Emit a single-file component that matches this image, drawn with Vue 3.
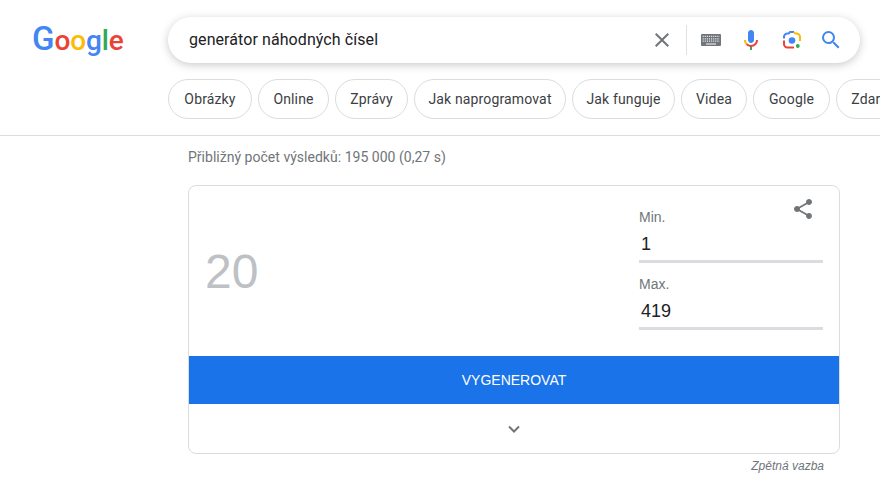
<script setup>
import { ref } from "vue";

const query = ref("generátor náhodných čísel");
const min = ref("1");
const max = ref("419");
const chips = [
  { text: "Obrázky", width: 84 },
  { text: "Online", width: 71 },
  { text: "Zprávy", width: 73 },
  { text: "Jak naprogramovat", width: 152 },
  { text: "Jak funguje", width: 103 },
  { text: "Videa", width: 66 },
  { text: "Google", width: 77 },
  { text: "Zdarma", width: 80 }
];
const logo = [
  { ch: "G", color: "#4285f4" },
  { ch: "o", color: "#ea4335" },
  { ch: "o", color: "#fbbc05" },
  { ch: "g", color: "#4285f4" },
  { ch: "l", color: "#34a853" },
  { ch: "e", color: "#ea4335" }
];
</script>

<template>
  <div class="page">
    <header class="header">
      <div class="top">
        <div class="logo">
          <span v-for="(l, i) in logo" :key="i" :style="{ color: l.color }">{{ l.ch }}</span>
        </div>
        <div class="search">
          <input class="query" type="text" v-model="query" />
          <svg class="clear" width="24" height="24" viewBox="0 0 24 24">
            <path fill="#70757a" d="M19 6.41L17.59 5 12 10.59 6.41 5 5 6.41 10.59 12 5 17.59 6.41 19 12 13.41 17.59 19 19 17.59 13.41 12z" />
          </svg>
          <span class="divider"></span>
          <svg class="kbd" width="20" height="12" viewBox="0 0 20 12">
            <rect width="20" height="12" rx="1" fill="#70757a" />
            <path stroke="#e4e5e7" stroke-width="1.2" stroke-dasharray="1.2 0.9" d="M1.6 2.4h17M1.6 4.8h17M1.6 7.2h17" />
            <path stroke="#e4e5e7" stroke-width="1.2" d="M5 10h10" />
          </svg>
          <svg class="mic" width="24" height="24" viewBox="0 0 24 24">
            <path fill="#4285f4" d="m12 15c1.66 0 3-1.31 3-2.97v-7.02c0-1.66-1.34-3.01-3-3.01s-3 1.34-3 3.01v7.02c0 1.66 1.34 2.97 3 2.97z" />
            <path fill="#34a853" d="m11 18.08h2v3.92h-2z" />
            <path fill="#fbbc04" d="m7.05 16.87c-1.27-1.33-2.05-2.83-2.05-4.87h2c0 1.45 0.56 2.42 1.47 3.38v0.32l-1.15 1.18z" />
            <path fill="#ea4335" d="m12 16.93a4.97 5.25 0 0 1 -3.54 -1.55l-1.41 1.49c1.26 1.34 3.02 2.13 4.95 2.13 3.87 0 6.99-2.92 6.99-6.99h-2c0 2.92-2.24 4.92-4.99 4.92z" />
          </svg>
          <svg class="lens" width="20" height="20" viewBox="0 0 20 20">
            <circle cx="10" cy="10.500" r="3.3" fill="#4285f4" />
            <circle cx="15.8" cy="16" r="1.9" fill="#34a853" />
            <path fill="none" stroke="#4285f4" stroke-width="2" d="M2 8.500V7A3.500 3.500 0 0 1 5.500 3.500H6.800L8 2h4" />
            <path fill="none" stroke="#ea4335" stroke-width="2" d="M2 10.500v3.500A3.500 3.500 0 0 0 5.500 17.500H12" />
            <path fill="none" stroke="#fbbc05" stroke-width="2" d="M12 2l1.200 1.500h1.300A3.500 3.500 0 0 1 18 7v4" />
          </svg>
          <svg class="glass" width="24" height="24" viewBox="0 0 24 24">
            <path fill="#4285f4" d="M15.5 14h-.79l-.28-.27A6.471 6.471 0 0 0 16 9.500 6.500 6.500 0 1 0 9.500 16c1.610 0 3.090-.59 4.230-1.570l.27.28v.79l5 4.990L20.490 19l-4.990-5zm-6 0C7.010 14 5 11.990 5 9.500S7.010 5 9.500 5 14 7.010 14 9.500 11.990 14 9.500 14z" />
          </svg>
        </div>
      </div>
      <div class="chips">
        <span v-for="c in chips" :key="c.text" class="chip" :style="{ width: c.width + 'px' }">{{ c.text }}</span>
      </div>
    </header>

    <main class="content">
      <div class="stats">Přibližný počet výsledků: 195 000 (0,27 s)</div>
      <section class="card">
        <svg class="share" width="24" height="24" viewBox="0 0 24 24">
          <path fill="#70757a" d="M18 16.080c-.76 0-1.440.3-1.960.77L8.910 12.700c.05-.23.09-.46.09-.7s-.04-.47-.09-.7l7.050-4.110c.54.5 1.250.81 2.040.81 1.660 0 3-1.340 3-3s-1.340-3-3-3-3 1.340-3 3c0 .24.04.47.09.7L8.040 9.810C7.500 9.310 6.790 9 6 9c-1.660 0-3 1.340-3 3s1.340 3 3 3c.79 0 1.500-.31 2.040-.81l7.120 4.160c-.05.21-.08.43-.08.65 0 1.610 1.310 2.920 2.920 2.920 1.610 0 2.920-1.310 2.920-2.920s-1.310-2.920-2.920-2.920z" />
        </svg>
        <div class="body">
          <div class="result">20</div>
          <div class="fields">
            <label class="field">
              <span class="label">Min.</span>
              <input class="num" type="text" v-model="min" />
            </label>
            <label class="field">
              <span class="label">Max.</span>
              <input class="num" type="text" v-model="max" />
            </label>
          </div>
        </div>
        <button class="generate">VYGENEROVAT</button>
        <div class="more">
          <svg width="24" height="24" viewBox="0 0 24 24">
            <path fill="none" stroke="#70757a" stroke-width="2" d="M7 9.500l5 5 5-5" />
          </svg>
        </div>
      </section>
      <div class="feedback">Zpětná vazba</div>
    </main>
  </div>
</template>

<style>
html, body {
  margin: 0;
  background: #fff;
  overflow: hidden;
}
</style>

<style scoped>
.page {
  width: 880px;
  height: 504px;
  overflow: hidden;
  font-family: "Liberation Sans", Arial, sans-serif;
}
.header {
  height: 118px;
  border-bottom: 1px solid #dadce0;
  padding-top: 17px;
}
.top {
  display: flex;
  height: 46px;
}
.logo {
  flex: none;
  width: 168px;
  height: 46px;
  padding-left: 32px;
  box-sizing: border-box;
  font-family: "Roboto", sans-serif;
  font-size: 28px;
  font-weight: 500;
  line-height: 47px;
  letter-spacing: -0.1px;
  white-space: nowrap;
}
.logo span {
  line-height: 1;
}
.logo span:first-child {
  font-size: 33px;
}
.search {
  flex: none;
  width: 692px;
  height: 46px;
  border-radius: 23px;
  box-shadow: 0 2px 8px rgba(60, 64, 67, 0.28);
  display: flex;
  align-items: center;
  background: #fff;
}
.query {
  flex: 1;
  min-width: 0;
  border: 0;
  outline: 0;
  padding: 0 0 0 21px;
  height: 34px;
  margin-top: -2px;
  font-family: "Roboto", sans-serif;
  font-size: 16px;
  letter-spacing: 0.08px;
  color: #202124;
  background: transparent;
}
.clear {
  margin-left: 10px;
}
.divider {
  width: 1px;
  height: 30px;
  background: #dfe1e5;
  margin: 0 14px 0 12px;
}
.mic {
  margin-left: 18px;
}
.lens {
  margin-left: 19px;
}
.glass {
  margin: 0 17px 0 17px;
}
.chips {
  display: flex;
  gap: 6px;
  margin-top: 16px;
  padding-left: 168px;
  white-space: nowrap;
}
.chip {
  flex: none;
  box-sizing: border-box;
  height: 40px;
  line-height: 38px;
  text-align: center;
  border: 1px solid #dadce0;
  border-radius: 20px;
  font-family: "Roboto", sans-serif;
  font-size: 14px;
  letter-spacing: 0.15px;
  color: #3c4043;
}
.content {
  width: 652px;
  margin-left: 188px;
}
.stats {
  height: 49px;
  line-height: 42px;
  font-family: "Roboto", sans-serif;
  font-size: 14px;
  letter-spacing: 0.02px;
  color: #70757a;
  white-space: nowrap;
}
.card {
  position: relative;
  border: 1px solid #dadce0;
  border-radius: 8px;
  overflow: hidden;
}
.share {
  position: absolute;
  top: 11px;
  right: 24px;
}
.body {
  height: 170px;
  display: flex;
  align-items: center;
  justify-content: space-between;
  padding: 0 16px;
  box-sizing: border-box;
}
.result {
  font-size: 48px;
  line-height: 56px;
  padding-top: 2px;
  color: #bdc1c6;
}
.fields {
  align-self: flex-start;
  display: flex;
  flex-direction: column;
  gap: 13px;
  width: 184px;
  margin-top: 23px;
}
.field {
  display: block;
}
.label {
  display: block;
  font-size: 14px;
  line-height: 16px;
  color: #70757a;
}
.num {
  display: block;
  width: 100%;
  box-sizing: border-box;
  height: 38px;
  padding: 3px 0 0 2px;
  border: 0;
  border-bottom: 3px solid #dadce0;
  outline: 0;
  font-family: "Liberation Sans", Arial, sans-serif;
  font-size: 18px;
  color: #202124;
  background: transparent;
}
.generate {
  display: block;
  width: 100%;
  height: 48px;
  border: 0;
  padding: 0;
  background: #1a73e8;
  color: #fff;
  font-family: "Liberation Sans", Arial, sans-serif;
  font-size: 14px;
}
.more {
  height: 49px;
  display: flex;
  align-items: center;
  justify-content: center;
}
.feedback {
  margin-top: 4px;
  padding-right: 16px;
  text-align: right;
  font-size: 12px;
  line-height: 16px;
  font-style: italic;
  color: #70757a;
}
</style>
